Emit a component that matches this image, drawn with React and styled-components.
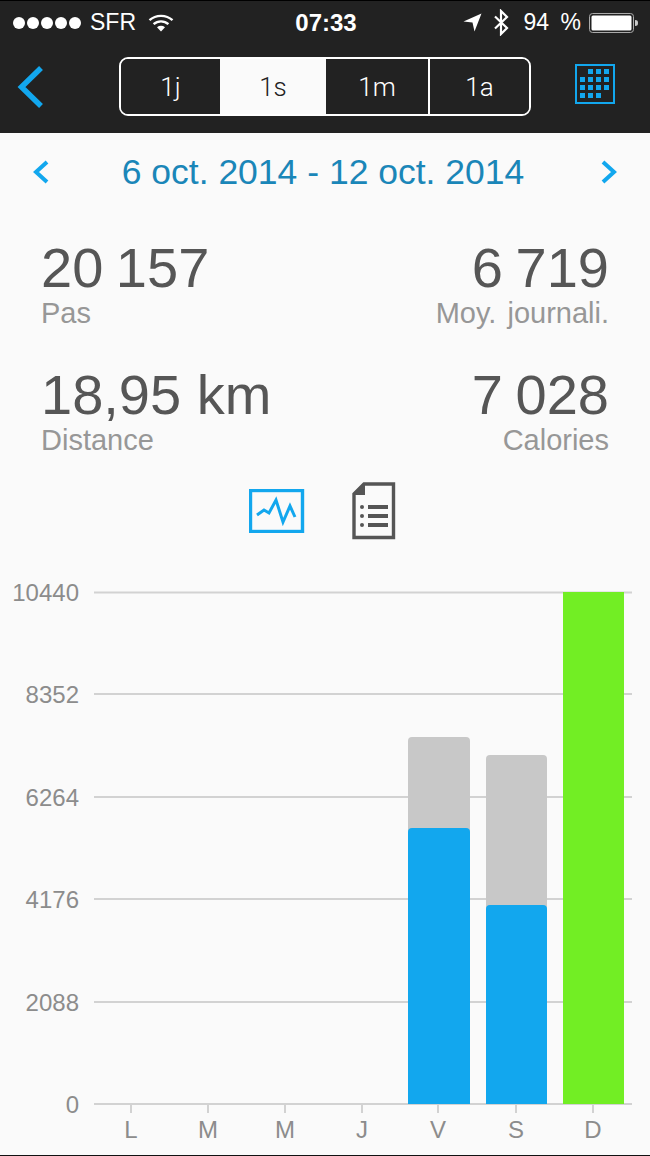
import React from "react";
import styled, { createGlobalStyle } from "styled-components";

const GlobalStyle = createGlobalStyle`
  html, body {
    margin: 0;
    padding: 0;
    background: #fafafa;
  }
`;

const FONT = `"Liberation Sans", Arial, sans-serif`;
const LIGHT = `Roboto, "Liberation Sans", sans-serif`;

const Screen = styled.div`
  width: 650px;
  height: 1156px;
  overflow: hidden;
  display: flex;
  flex-direction: column;
  background: #fafafa;
  border-bottom: 1px solid #111;
  box-sizing: border-box;
  font-family: ${FONT};
`;

const Header = styled.div`
  height: 133px;
  flex: none;
  background: #222222;
  border-top: 1px solid #000;
  box-sizing: border-box;
  display: flex;
  flex-direction: column;
`;

const StatusBar = styled.div`
  height: 43px;
  display: grid;
  grid-template-columns: 1fr auto 1fr;
  align-items: center;
  padding: 0 11px 0 13px;
  color: #fff;
  font-size: 23px;
`;

const StatusLeft = styled.div`
  display: flex;
  align-items: center;
`;

const StatusRight = styled.div`
  display: flex;
  align-items: center;
  justify-content: flex-end;
  gap: 8px;
`;

const Dots = styled.div`
  display: flex;
  gap: 2px;
  margin-right: 9px;
`;

const Dot = styled.span`
  width: 12px;
  height: 12px;
  border-radius: 50%;
  background: #fff;
`;

const Clock = styled.div`
  font-weight: 700;
  font-size: 24px;
`;

const Percent = styled.span`
  word-spacing: 5px;
  margin-left: 7px;
`;

const StatusIcon = styled.svg`
  display: block;
  flex: none;
  margin-left: ${(p) => p.$left || 0}px;
`;

const NavBar = styled.div`
  flex: 1;
  display: flex;
  align-items: flex-start;
  padding-top: 13px;
`;

const BackButton = styled.div`
  width: 119px;
  height: 59px;
  display: flex;
  align-items: center;
  padding-left: 17px;
  box-sizing: border-box;
`;

const Segments = styled.div`
  width: 412px;
  height: 59px;
  box-sizing: border-box;
  border: 2px solid #fff;
  border-radius: 9px;
  overflow: hidden;
  display: grid;
  grid-template-columns: 99px 106px 102px 1fr;
`;

const Segment = styled.div`
  display: flex;
  align-items: center;
  justify-content: center;
  font-family: ${LIGHT};
  font-weight: 300;
  font-size: 26px;
  color: ${(p) => (p.$active ? "#222" : "#fff")};
  background: ${(p) => (p.$active ? "#fafafa" : "#222")};
  border-left: ${(p) => (p.$divider ? "2px solid #fff" : "none")};
`;

const CalendarButton = styled.div`
  margin: 7px 0 0 44px;
`;

const DateRow = styled.div`
  height: 78px;
  flex: none;
  display: flex;
  align-items: center;
  justify-content: space-between;
  padding: 0 32px;
  color: #1a86b8;
  font-size: 35.5px;
`;

const DateLabel = styled.span`
  margin-right: 4px;
`;

const DateChevron = styled.svg`
  display: block;
  transform: ${(p) => (p.$right ? "scaleX(-1)" : "none")};
`;

const Stats = styled.div`
  display: grid;
  grid-template-columns: 1fr 1fr;
  row-gap: 38px;
  padding: 28px 41px 0;
`;

const Stat = styled.div`
  display: flex;
  flex-direction: column;
  align-items: ${(p) => (p.$right ? "flex-end" : "flex-start")};
`;

const StatValue = styled.div`
  font-size: 56px;
  line-height: 58px;
  color: #565656;
  height: 59px;
  word-spacing: ${(p) => (p.$wide ? 0 : -3)}px;
`;

const StatLabel = styled.div`
  font-size: 29px;
  line-height: 30px;
  color: #979797;
  word-spacing: 3px;
`;

const ViewToggle = styled.div`
  display: flex;
  justify-content: center;
  align-items: center;
  gap: 47px;
  padding-top: 27px;
  margin-left: -6px;
`;

const Chart = styled.svg`
  display: block;
  flex: none;
  margin-top: 30px;
  font-family: ${FONT};
`;

const WifiIcon = () => (
  <StatusIcon width="26" height="20" viewBox="0 0 26 20" $left={12}>
    <g fill="none" stroke="#fff" strokeWidth="2.4">
      <path d="M1.5 7.2C7.8 1.4 18.2 1.4 24.5 7.2" />
      <path d="M5.6 11.2C9.8 7.4 16.2 7.4 20.4 11.2" />
    </g>
    <path d="M9 14.2C11.4 12.4 14.6 12.4 17 14.2L13 18.5Z" fill="#fff" />
  </StatusIcon>
);

const LocationIcon = () => (
  <StatusIcon width="19" height="19" viewBox="0 0 19 19">
    <path d="M18.5 0.5L11.5 18.5L9.5 9.5L0.5 8.5Z" fill="#fff" />
  </StatusIcon>
);

const BluetoothIcon = () => (
  <StatusIcon width="16" height="27" viewBox="0 0 16 27" $left={3}>
    <path d="M2 7.5L14 19L8 25V2L14 8L2 19.5" fill="none" stroke="#fff" strokeWidth="2.2" />
  </StatusIcon>
);

const BatteryIcon = () => (
  <StatusIcon width="50" height="20" viewBox="0 0 50 20">
    <rect x="0.5" y="0.5" width="44" height="19" rx="3" fill="none" stroke="#aaa" />
    <rect x="2.5" y="2.5" width="40" height="15" rx="1.5" fill="#fff" />
    <path d="M46 7c2.5 0 3 1 3 3s-.5 3-3 3z" fill="#ccc" />
  </StatusIcon>
);

const BackIcon = () => (
  <svg width="28" height="44" viewBox="0 0 28 44">
    <path d="M24 3L4.5 22L24 41" fill="none" stroke="#12a7ee" strokeWidth="5.5" />
  </svg>
);

const CalendarIcon = () => {
  const rows = [
    [1, 2, 3],
    [0, 1, 2, 3],
    [0, 1, 2, 3],
    [0, 1, 2],
  ];
  return (
    <svg width="40" height="40" viewBox="0 0 40 40">
      <rect x="1" y="1" width="38" height="38" fill="none" stroke="#12a7ee" strokeWidth="2" />
      {rows.map((cols, r) =>
        cols.map((c) => (
          <rect key={`${r}-${c}`} x={5 + c * 8} y={5 + r * 8} width="5" height="5" fill="#12a7ee" />
        ))
      )}
    </svg>
  );
};

const Chevron = ({ right }) => (
  <DateChevron width="18" height="24" viewBox="0 0 18 24" $right={right}>
    <path d="M15 2L4 12L15 22" fill="none" stroke="#12a7ee" strokeWidth="4" />
  </DateChevron>
);

const ActivityIcon = () => (
  <svg width="56" height="44" viewBox="0 0 56 44">
    <rect x="1.5" y="1.5" width="52" height="41" fill="none" stroke="#12a7ee" strokeWidth="3.4" />
    <path
      d="M8 26L15 21L20 24L27 11L34 33L41 17L46 28"
      fill="none"
      stroke="#12a7ee"
      strokeWidth="3"
    />
  </svg>
);

const ListIcon = () => (
  <svg width="44" height="58" viewBox="0 0 44 58">
    <path d="M12 2H41.5V55.5H2V12Z" fill="none" stroke="#555" strokeWidth="3.4" />
    <path d="M13 2V13H2Z" fill="#555" />
    <g fill="#555">
      <circle cx="10" cy="25" r="2" />
      <circle cx="10" cy="34" r="2" />
      <circle cx="10" cy="43" r="2" />
      <rect x="16" y="23" width="20" height="4" />
      <rect x="16" y="32" width="20" height="4" />
      <rect x="16" y="41" width="20" height="4" />
    </g>
  </svg>
);

const GRID = [
  { label: "10440", y: 592.5 },
  { label: "8352", y: 694 },
  { label: "6264", y: 797 },
  { label: "4176", y: 899 },
  { label: "2088", y: 1002 },
  { label: "0", y: 1104 },
];

const DAYS = [
  { label: "L", x: 131 },
  { label: "M", x: 208 },
  { label: "M", x: 285 },
  { label: "J", x: 362 },
  { label: "V", x: 438 },
  { label: "S", x: 516 },
  { label: "D", x: 593 },
];

const BARS = [
  { x: 408, w: 62, top: 737, color: "#c8c8c8" },
  { x: 408, w: 62, top: 828, color: "#12a7ee" },
  { x: 486, w: 61, top: 755, color: "#c8c8c8" },
  { x: 486, w: 61, top: 905, color: "#12a7ee" },
  { x: 563, w: 61, top: 592, color: "#72ee24", square: true },
];

const CHART_TOP = 570;

const ActivityChart = () => (
  <Chart width="650" height="580" viewBox={`0 ${CHART_TOP} 650 580`}>
    {GRID.map((g) => (
      <g key={g.label}>
        <line x1="94" x2="632" y1={g.y} y2={g.y} stroke="#d2d2d2" strokeWidth="2" />
        <text x="79" y={g.y + 8.5} textAnchor="end" fontSize="24" fill="#8c8c8c">
          {g.label}
        </text>
      </g>
    ))}
    {BARS.map((b) => (
      <path
        key={`${b.x}-${b.top}`}
        d={
          b.square
            ? `M${b.x} ${b.top}H${b.x + b.w}V1104H${b.x}Z`
            : `M${b.x} 1104V${b.top + 4}Q${b.x} ${b.top} ${b.x + 4} ${b.top}H${b.x + b.w - 4}Q${b.x + b.w} ${b.top} ${b.x + b.w} ${b.top + 4}V1104Z`
        }
        fill={b.color}
      />
    ))}
    {DAYS.map((d, i) => (
      <g key={i}>
        <line x1={d.x} x2={d.x} y1="1104" y2="1113" stroke="#d2d2d2" strokeWidth="2" />
        <text x={d.x} y="1138" textAnchor="middle" fontSize="24" fill="#8c8c8c">
          {d.label}
        </text>
      </g>
    ))}
  </Chart>
);

export default function App() {
  return (
    <Screen>
      <GlobalStyle />
      <Header>
        <StatusBar>
          <StatusLeft>
            <Dots>
              {[0, 1, 2, 3, 4].map((i) => (
                <Dot key={i} />
              ))}
            </Dots>
            SFR
            <WifiIcon />
          </StatusLeft>
          <Clock>07:33</Clock>
          <StatusRight>
            <LocationIcon />
            <BluetoothIcon />
            <Percent>94 %</Percent>
            <BatteryIcon />
          </StatusRight>
        </StatusBar>
        <NavBar>
          <BackButton>
            <BackIcon />
          </BackButton>
          <Segments>
            <Segment>1j</Segment>
            <Segment $active>1s</Segment>
            <Segment>1m</Segment>
            <Segment $divider>1a</Segment>
          </Segments>
          <CalendarButton>
            <CalendarIcon />
          </CalendarButton>
        </NavBar>
      </Header>
      <DateRow>
        <Chevron />
        <DateLabel>6 oct. 2014 - 12 oct. 2014</DateLabel>
        <Chevron right />
      </DateRow>
      <Stats>
        <Stat>
          <StatValue>20 157</StatValue>
          <StatLabel>Pas</StatLabel>
        </Stat>
        <Stat $right>
          <StatValue>6 719</StatValue>
          <StatLabel>Moy. journali.</StatLabel>
        </Stat>
        <Stat>
          <StatValue $wide>18,95 km</StatValue>
          <StatLabel>Distance</StatLabel>
        </Stat>
        <Stat $right>
          <StatValue>7 028</StatValue>
          <StatLabel>Calories</StatLabel>
        </Stat>
      </Stats>
      <ViewToggle>
        <ActivityIcon />
        <ListIcon />
      </ViewToggle>
      <ActivityChart />
    </Screen>
  );
}
